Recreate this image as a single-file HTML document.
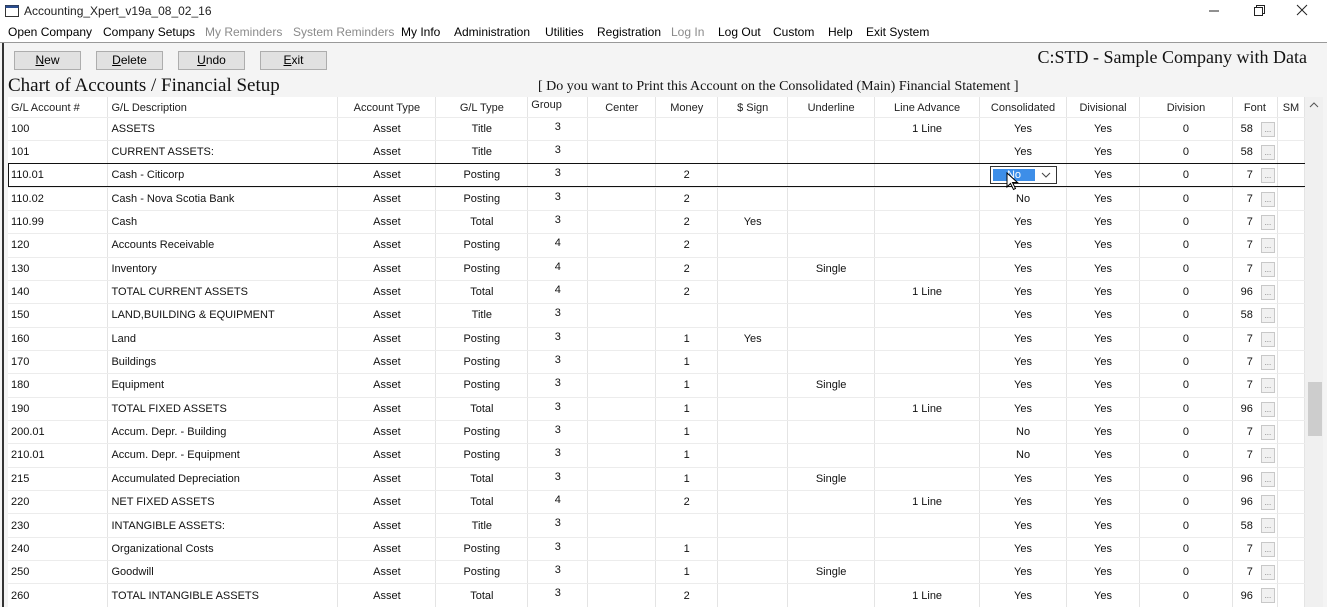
<!DOCTYPE html>
<html><head><meta charset="utf-8">
<style>
*{margin:0;padding:0;box-sizing:border-box}
body{width:1327px;height:607px;overflow:hidden;background:#f4f4f4;font-family:"Liberation Sans",sans-serif;position:relative;color:#000}
.tb{position:absolute;left:0;top:0;width:1327px;height:22px;background:#fff}
.tb .t{position:absolute;left:24px;top:4px;font-size:12px;color:#222}
.menu{position:absolute;left:0;top:22px;width:1327px;height:21px;background:#fff;border-bottom:1px solid #999;font-size:12px}
.menu span{position:absolute;top:3px}
.g{color:#8a8a8a}
.btn{position:absolute;top:51px;width:67px;height:19px;background:#e1e1e1;border:1px solid #adadad;font-size:12px;text-align:center;line-height:17px}
.ser{font-family:"Liberation Serif",serif;position:absolute;color:#111}
.grid{position:absolute;left:8px;top:97px;width:1297px;height:510px;background:#fff;overflow:hidden}
table{border-collapse:collapse;table-layout:fixed;font-size:11px;position:absolute;left:0;top:0}
td{height:23.35px;border-right:1px solid #e4e4e4;border-bottom:1px solid #ececec;white-space:nowrap;overflow:hidden;text-align:center;padding:0 3px;color:#111}
tr.h td{height:20px;color:#222;padding-top:2px}
td:nth-child(1),td:nth-child(2){text-align:left}
td:nth-child(5){vertical-align:top;padding-top:3px}
tr.h td:nth-child(5){text-align:left;padding-top:2px}
td.f{text-align:left;padding-left:0;position:relative}
td.f b{font-weight:normal;display:inline-block;width:24px;text-align:right;padding-right:4px}
td.f i{position:absolute;left:28px;top:4px;width:14px;height:15px;border:1px solid #c8c8c8;background:#f1f1f1;font-size:8px;font-style:normal;color:#777;line-height:14px;text-align:center}
.sel{position:absolute;left:8px;top:163px;width:1298px;height:24px;border:1px solid #111}
.dd{position:absolute;left:990px;top:166px;width:67px;height:18px;border:1px solid #333;background:#fff}
.dd .in{position:absolute;left:2px;top:2px;width:42px;height:12px;background:#3d8ee8;color:#fff;font-size:11px;line-height:12px;text-align:center;outline:1px dotted #fff}
.sb{position:absolute;left:1305px;top:97px;width:18px;height:510px;background:#f0f0f0}
.th{position:absolute;left:1308px;top:382px;width:14px;height:54px;background:#cdcdcd}
</style></head><body>
<div class="tb">
<svg style="position:absolute;left:5px;top:5px" width="14" height="12"><rect x="0.5" y="0.5" width="13" height="11" fill="#fff" stroke="#333"/><rect x="0.5" y="0.5" width="13" height="2.5" fill="#2a4d8f"/></svg>
<span class="t">Accounting_Xpert_v19a_08_02_16</span>
<svg style="position:absolute;left:1208px;top:4px" width="110" height="14"><line x1="1" y1="7" x2="11" y2="7" stroke="#222"/><rect x="46.5" y="3.5" width="8" height="8" fill="none" stroke="#222"/><path d="M48.5 3.5V1.5h8v8h-2" fill="none" stroke="#222"/><path d="M89 1l10 10M99 1l-10 10" stroke="#222"/></svg>
</div>
<div class="menu">
<span style="left:8px">Open Company</span><span style="left:103px">Company Setups</span><span class="g" style="left:205px">My Reminders</span><span class="g" style="left:293px">System Reminders</span><span style="left:401px">My Info</span><span style="left:454px">Administration</span><span style="left:545px">Utilities</span><span style="left:597px">Registration</span><span class="g" style="left:671px">Log In</span><span style="left:718px">Log Out</span><span style="left:773px">Custom</span><span style="left:828px">Help</span><span style="left:866px">Exit System</span>
</div>
<div class="btn" style="left:14px"><u>N</u>ew</div>
<div class="btn" style="left:96px"><u>D</u>elete</div>
<div class="btn" style="left:178px"><u>U</u>ndo</div>
<div class="btn" style="left:260px"><u>E</u>xit</div>
<div class="ser" style="right:20px;top:47px;font-size:18px">C:STD - Sample Company with Data</div>
<div class="ser" style="left:8px;top:75px;font-size:19px">Chart of Accounts / Financial Setup</div>
<div class="ser" style="left:538px;top:79px;font-size:14px">[ Do you want to Print this Account on the Consolidated (Main) Financial Statement ]</div>
<div class="grid">
<table>
<colgroup><col style="width:100px"><col style="width:230px"><col style="width:98px"><col style="width:92px"><col style="width:60px"><col style="width:68px"><col style="width:62px"><col style="width:70px"><col style="width:87px"><col style="width:105px"><col style="width:87px"><col style="width:73px"><col style="width:93px"><col style="width:45px"><col style="width:27px"></colgroup>
<tr class="h"><td>G/L Account #</td><td>G/L Description</td><td>Account Type</td><td>G/L Type</td><td>Group</td><td>Center</td><td>Money</td><td>$ Sign</td><td>Underline</td><td>Line Advance</td><td>Consolidated</td><td>Divisional</td><td>Division</td><td>Font</td><td>SM</td></tr>
<tr><td>100</td><td>ASSETS</td><td>Asset</td><td>Title</td><td>3</td><td></td><td></td><td></td><td></td><td>1 Line</td><td>Yes</td><td>Yes</td><td>0</td><td class="f"><b>58</b><i>...</i></td><td></td></tr>
<tr><td>101</td><td>CURRENT ASSETS:</td><td>Asset</td><td>Title</td><td>3</td><td></td><td></td><td></td><td></td><td></td><td>Yes</td><td>Yes</td><td>0</td><td class="f"><b>58</b><i>...</i></td><td></td></tr>
<tr><td>110.01</td><td>Cash - Citicorp</td><td>Asset</td><td>Posting</td><td>3</td><td></td><td>2</td><td></td><td></td><td></td><td></td><td>Yes</td><td>0</td><td class="f"><b>7</b><i>...</i></td><td></td></tr>
<tr><td>110.02</td><td>Cash - Nova Scotia Bank</td><td>Asset</td><td>Posting</td><td>3</td><td></td><td>2</td><td></td><td></td><td></td><td>No</td><td>Yes</td><td>0</td><td class="f"><b>7</b><i>...</i></td><td></td></tr>
<tr><td>110.99</td><td>Cash</td><td>Asset</td><td>Total</td><td>3</td><td></td><td>2</td><td>Yes</td><td></td><td></td><td>Yes</td><td>Yes</td><td>0</td><td class="f"><b>7</b><i>...</i></td><td></td></tr>
<tr><td>120</td><td>Accounts Receivable</td><td>Asset</td><td>Posting</td><td>4</td><td></td><td>2</td><td></td><td></td><td></td><td>Yes</td><td>Yes</td><td>0</td><td class="f"><b>7</b><i>...</i></td><td></td></tr>
<tr><td>130</td><td>Inventory</td><td>Asset</td><td>Posting</td><td>4</td><td></td><td>2</td><td></td><td>Single</td><td></td><td>Yes</td><td>Yes</td><td>0</td><td class="f"><b>7</b><i>...</i></td><td></td></tr>
<tr><td>140</td><td>TOTAL CURRENT ASSETS</td><td>Asset</td><td>Total</td><td>4</td><td></td><td>2</td><td></td><td></td><td>1 Line</td><td>Yes</td><td>Yes</td><td>0</td><td class="f"><b>96</b><i>...</i></td><td></td></tr>
<tr><td>150</td><td>LAND,BUILDING &amp; EQUIPMENT</td><td>Asset</td><td>Title</td><td>3</td><td></td><td></td><td></td><td></td><td></td><td>Yes</td><td>Yes</td><td>0</td><td class="f"><b>58</b><i>...</i></td><td></td></tr>
<tr><td>160</td><td>Land</td><td>Asset</td><td>Posting</td><td>3</td><td></td><td>1</td><td>Yes</td><td></td><td></td><td>Yes</td><td>Yes</td><td>0</td><td class="f"><b>7</b><i>...</i></td><td></td></tr>
<tr><td>170</td><td>Buildings</td><td>Asset</td><td>Posting</td><td>3</td><td></td><td>1</td><td></td><td></td><td></td><td>Yes</td><td>Yes</td><td>0</td><td class="f"><b>7</b><i>...</i></td><td></td></tr>
<tr><td>180</td><td>Equipment</td><td>Asset</td><td>Posting</td><td>3</td><td></td><td>1</td><td></td><td>Single</td><td></td><td>Yes</td><td>Yes</td><td>0</td><td class="f"><b>7</b><i>...</i></td><td></td></tr>
<tr><td>190</td><td>TOTAL FIXED ASSETS</td><td>Asset</td><td>Total</td><td>3</td><td></td><td>1</td><td></td><td></td><td>1 Line</td><td>Yes</td><td>Yes</td><td>0</td><td class="f"><b>96</b><i>...</i></td><td></td></tr>
<tr><td>200.01</td><td>Accum. Depr. - Building</td><td>Asset</td><td>Posting</td><td>3</td><td></td><td>1</td><td></td><td></td><td></td><td>No</td><td>Yes</td><td>0</td><td class="f"><b>7</b><i>...</i></td><td></td></tr>
<tr><td>210.01</td><td>Accum. Depr. - Equipment</td><td>Asset</td><td>Posting</td><td>3</td><td></td><td>1</td><td></td><td></td><td></td><td>No</td><td>Yes</td><td>0</td><td class="f"><b>7</b><i>...</i></td><td></td></tr>
<tr><td>215</td><td>Accumulated Depreciation</td><td>Asset</td><td>Total</td><td>3</td><td></td><td>1</td><td></td><td>Single</td><td></td><td>Yes</td><td>Yes</td><td>0</td><td class="f"><b>96</b><i>...</i></td><td></td></tr>
<tr><td>220</td><td>NET FIXED ASSETS</td><td>Asset</td><td>Total</td><td>4</td><td></td><td>2</td><td></td><td></td><td>1 Line</td><td>Yes</td><td>Yes</td><td>0</td><td class="f"><b>96</b><i>...</i></td><td></td></tr>
<tr><td>230</td><td>INTANGIBLE ASSETS:</td><td>Asset</td><td>Title</td><td>3</td><td></td><td></td><td></td><td></td><td></td><td>Yes</td><td>Yes</td><td>0</td><td class="f"><b>58</b><i>...</i></td><td></td></tr>
<tr><td>240</td><td>Organizational Costs</td><td>Asset</td><td>Posting</td><td>3</td><td></td><td>1</td><td></td><td></td><td></td><td>Yes</td><td>Yes</td><td>0</td><td class="f"><b>7</b><i>...</i></td><td></td></tr>
<tr><td>250</td><td>Goodwill</td><td>Asset</td><td>Posting</td><td>3</td><td></td><td>1</td><td></td><td>Single</td><td></td><td>Yes</td><td>Yes</td><td>0</td><td class="f"><b>7</b><i>...</i></td><td></td></tr>
<tr><td>260</td><td>TOTAL INTANGIBLE ASSETS</td><td>Asset</td><td>Total</td><td>3</td><td></td><td>2</td><td></td><td></td><td>1 Line</td><td>Yes</td><td>Yes</td><td>0</td><td class="f"><b>96</b><i>...</i></td><td></td></tr>
</table>
</div>
<div class="sel"></div>
<div class="dd"><div class="in">No</div><svg style="position:absolute;left:50px;top:5px" width="10" height="6"><path d="M1 1l4 4 4-4" fill="none" stroke="#444"/></svg></div>
<svg style="position:absolute;left:1006px;top:172px" width="14" height="20"><path d="M1 1v14l3.5-3.5 3 6 2-1-3-6h5z" fill="#fff" stroke="#000"/></svg>
<div class="sb"><svg style="position:absolute;left:4px;top:5px" width="10" height="6"><path d="M1 5l4-4 4 4" fill="none" stroke="#555"/></svg></div>
<div class="th"></div>
<div style="position:absolute;left:2px;top:43px;width:2px;height:564px;background:#333"></div>
</body></html>
